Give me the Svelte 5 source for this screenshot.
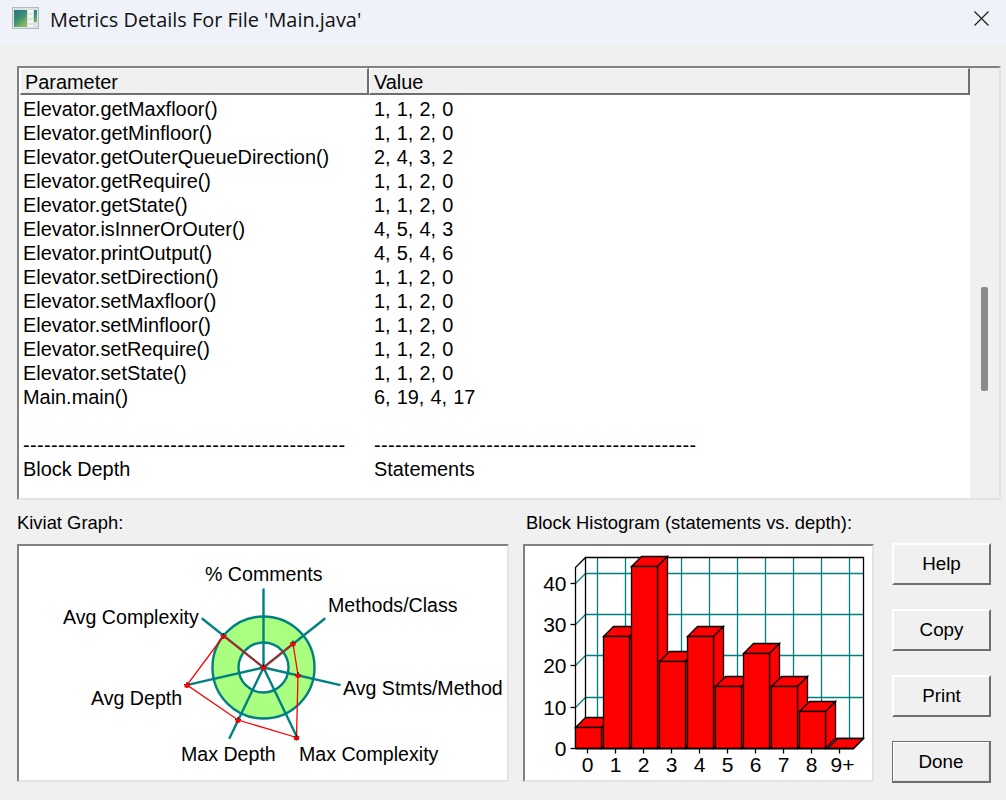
<script>
  const rows = [
    ['Elevator.getMaxfloor()', '1, 1, 2, 0'],
    ['Elevator.getMinfloor()', '1, 1, 2, 0'],
    ['Elevator.getOuterQueueDirection()', '2, 4, 3, 2'],
    ['Elevator.getRequire()', '1, 1, 2, 0'],
    ['Elevator.getState()', '1, 1, 2, 0'],
    ['Elevator.isInnerOrOuter()', '4, 5, 4, 3'],
    ['Elevator.printOutput()', '4, 5, 4, 6'],
    ['Elevator.setDirection()', '1, 1, 2, 0'],
    ['Elevator.setMaxfloor()', '1, 1, 2, 0'],
    ['Elevator.setMinfloor()', '1, 1, 2, 0'],
    ['Elevator.setRequire()', '1, 1, 2, 0'],
    ['Elevator.setState()', '1, 1, 2, 0'],
    ['Main.main()', '6, 19, 4, 17'],
    ['\u00a0', '\u00a0'],
    ['-'.repeat(46), '-'.repeat(46)],
    ['Block Depth', 'Statements']
  ];

  // Kiviat graph, coordinates relative to the panel's interior (origin 19,546)
  const ox = 19, oy = 546;
  const cx = 263.5 - ox, cy = 667.5 - oy;
  const spokes = Array.from({ length: 7 }, (_, i) => {
    const a = (i * 2 * Math.PI) / 7;
    return { x: cx + 79 * Math.sin(a), y: cy - 79 * Math.cos(a) };
  });
  const kiviat = [
    [263.5, 667.5], [293, 643.5], [298, 675], [296.5, 737.5], [238, 720], [187, 685], [223.5, 636]
  ].map(([x, y]) => [x - ox, y - oy]);
  const kivLabels = [
    ['% Comments', 205, 581],
    ['Methods/Class', 328, 612],
    ['Avg Stmts/Method', 343, 695],
    ['Max Complexity', 299, 761],
    ['Max Depth', 181, 761],
    ['Avg Depth', 91, 705],
    ['Avg Complexity', 63, 624]
  ];

  // Histogram, origin 525,546
  const hx = 525, hy = 546;
  const values = [5, 27, 44, 21, 27, 15, 23, 15, 9, 0];
  const xLabels = ['0', '1', '2', '3', '4', '5', '6', '7', '8', '9+'];
  const base = 748.5 - hy;
  const left = 575.5 - hx;
  const pitch = 28;
  const d = 10;
  const yOf = (v) => Math.round(748 - v * 4.135) + 0.5 - hy;
  const bars = values.map((v, i) => {
    const x = left + i * pitch;
    const y = yOf(v);
    return { x, y, w: 26, h: base - y };
  });
  const yTicks = [0, 10, 20, 30, 40];
  const vLines = Array.from({ length: 10 }, (_, i) => left + d + 12 + i * pitch);
  const wallRight = left + 278;
  const wallTop = 557 - hy + 0.5;
  const buttons = ['Help', 'Copy', 'Print', 'Done'];
</script>

<div class="window">
  <header class="titlebar">
    <svg class="appicon" width="27" height="22" viewBox="0 0 27 22" aria-hidden="true">
      <defs>
        <linearGradient id="pane" x1="0" y1="0" x2="0.6" y2="1">
          <stop offset="0" stop-color="#2f6f8f" />
          <stop offset="0.55" stop-color="#3c9070" />
          <stop offset="1" stop-color="#86b868" />
        </linearGradient>
      </defs>
      <rect x="0.5" y="0.5" width="26" height="21" fill="#dde3e4" stroke="#b4bcbe" />
      <rect x="2" y="3" width="13" height="17" fill="url(#pane)" />
      <rect x="16" y="3" width="5" height="3" fill="#f4f6f2" />
      <rect x="16" y="8" width="5" height="3" fill="#f4f6f2" />
      <rect x="16" y="13" width="5" height="3" fill="#f4f6f2" />
      <rect x="16" y="18" width="5" height="2" fill="#f4f6f2" />
      <rect x="22" y="3" width="3" height="12" fill="url(#pane)" />
    </svg>
    <span class="title">Metrics Details For File 'Main.java'</span>
    <svg class="close" width="15" height="15" viewBox="0 0 15 15" aria-hidden="true">
      <path d="M0.5 0.5 L14.5 14.5 M14.5 0.5 L0.5 14.5" stroke="#1a1a1a" stroke-width="1.2" fill="none" />
    </svg>
  </header>

  <main class="content">
    <section class="list">
      <div class="listmain">
        <div class="thead">
          <div class="th col1">Parameter</div>
          <div class="th col2">Value</div>
        </div>
        <div class="tbody">
          {#each rows as [a, b]}
            <div class="row" class:dash={a.startsWith('-')}><span class="c1">{a}</span><span class="c2">{b}</span></div>
          {/each}
        </div>
      </div>
      <div class="scroll"><div class="thumb"></div></div>
    </section>

    <section class="lower">
      <div class="kiviat">
        <div class="caption">Kiviat Graph:</div>
        <div class="sunken">
          <svg width="488" height="234" viewBox="0 0 488 234">
            <circle cx={cx} cy={cy} r="51" fill="#aaff80" stroke="#008080" stroke-width="2.4" />
            <circle cx={cx} cy={cy} r="25" fill="#fff" stroke="#008080" stroke-width="2.4" />
            {#each spokes as s}
              <line x1={cx} y1={cy} x2={s.x} y2={s.y} stroke="#008080" stroke-width="2.4" />
            {/each}
            <polygon points={kiviat.map((p) => p.join(',')).join(' ')} fill="none" stroke="#ff0000" stroke-width="1.3" />
            {#each kiviat as [x, y]}
              <path d="M{x - 3} {y - 0.5} H{x + 3} M{x} {y - 3} V{y + 3}" stroke="#000" stroke-width="1.2" fill="none" />
              <rect x={x - 2.5} y={y - 1} width="5" height="3.5" fill="#ff0000" />
            {/each}
            {#each kivLabels as [t, x, y]}
              <text x={x - ox} y={y - oy} class="chart">{t}</text>
            {/each}
          </svg>
        </div>
      </div>

      <div class="histogram">
        <div class="caption">Block Histogram (statements vs. depth):</div>
        <div class="sunken">
          <svg class="hist" width="347" height="234" viewBox="0 0 347 234">
            <!-- grid -->
            {#each yTicks.slice(1) as v}
              <line x1={left} y1={yOf(v)} x2={left + d} y2={yOf(v) - d} stroke="#008080" />
              <line x1={left + d} y1={yOf(v) - d} x2={wallRight + d} y2={yOf(v) - d} stroke="#008080" />
            {/each}
            {#each vLines as x}
              <line x1={x} y1={wallTop} x2={x} y2={base - d} stroke="#008080" />
            {/each}
            <!-- walls -->
            <path d="M{left} {base} V{wallTop + d} L{left + d} {wallTop} H{wallRight + d} V{base - d} L{wallRight} {base} H{left} M{left + d} {wallTop} V{base - d} M{left} {base} L{left + d} {base - d} H{wallRight + d}" fill="none" stroke="#000" />
            <!-- bars -->
            {#each bars as b}
              {#if b.h > 1}
                <path d="M{b.x} {b.y} l{d} {-d} h{b.w} l{-d} {d} z" fill="#ff0000" stroke="#000" />
                <path d="M{b.x + b.w} {b.y} l{d} {-d} v{b.h} l{-d} {d} z" fill="#ff0000" stroke="#000" />
                <rect x={b.x} y={b.y} width={b.w} height={b.h} fill="#ff0000" stroke="#000" />
              {:else}
                <path d="M{b.x} {b.y} l{d} {-d} h{b.w} l{-d} {d} z" fill="#ff0000" stroke="#000" />
              {/if}
            {/each}
            <!-- axes -->
            <line x1={left} y1={base} x2={wallRight} y2={base} stroke="#000" />
            {#each yTicks as v}
              <line x1={left - 5} y1={yOf(v)} x2={left} y2={yOf(v)} stroke="#000" />
              <text x={left - 9} y={yOf(v) + 7.5} text-anchor="end" class="chart axis">{v}</text>
            {/each}
            {#each xLabels as t, i}
              <line x1={left + 12 + i * pitch} y1={base} x2={left + 12 + i * pitch} y2={base + 5} stroke="#000" />
              <text x={left + 12 + i * pitch + (t === '9+' ? 3 : 0)} y={base + 23} text-anchor="middle" class="chart axis">{t}</text>
            {/each}
          </svg>
        </div>
      </div>

      <div class="buttons">
        {#each buttons as b}
          <button class:default={b === 'Done'}>{b}</button>
        {/each}
      </div>
    </section>
  </main>
</div>

<style>
  :global(body) {
    margin: 0;
    background: #f0f0f0;
  }
  .window {
    width: 1006px;
    height: 800px;
    background: #f0f0f0;
    font-family: "Liberation Sans", Arial, sans-serif;
    font-size: 18.4px;
    color: #000;
    overflow: hidden;
  }
  .titlebar {
    height: 45px;
    background: #eff3f9;
    display: flex;
    align-items: center;
    box-sizing: border-box;
    padding: 0 17px 0 12px;
  }
  .appicon {
    margin-right: 11px;
    margin-top: -9px;
  }
  .title {
    font-family: "Open Sans", "Noto Sans", sans-serif;
    font-size: 19.9px;
    flex: 1;
    color: #111;
    padding-bottom: 6px;
  }
  .close {
    margin-top: -8px;
  }
  .content {
    padding: 21px 5px 0 17px;
  }
  .list {
    height: 434px;
    box-sizing: border-box;
    border-top: 2px solid #808080;
    border-left: 2px solid #808080;
    border-right: 2px solid #e3e3e3;
    border-bottom: 2px solid #e3e3e3;
    display: flex;
    background: #fff;
    font-size: 19.9px;
  }
  .listmain {
    flex: 1;
    min-width: 0;
    overflow: hidden;
  }
  .thead {
    display: flex;
    height: 27px;
    background: #f0f0f0;
    margin-left: 1px;
    width: 950px;
  }
  .th {
    box-sizing: border-box;
    height: 27px;
    line-height: 27px;
    padding-left: 4px;
    border-top: 1px solid #fff;
    border-left: 1px solid #fff;
    border-right: 2px solid #6e6e6e;
    border-bottom: 2px solid #6e6e6e;
  }
  .col1 {
    width: 349px;
  }
  .col2 {
    flex: 1;
  }
  .tbody {
    padding: 2px 0 0 4px;
  }
  .row {
    display: flex;
    height: 24px;
    line-height: 24px;
    white-space: nowrap;
  }
  .dash {
    letter-spacing: 0.39px;
  }
  .c1 {
    width: 351px;
    flex: none;
  }
  .c2 {
    word-spacing: 0.6px;
  }
  .scroll {
    width: 29px;
    flex: none;
    background: #f0f0f0;
    position: relative;
  }
  .thumb {
    position: absolute;
    left: 11px;
    top: 219px;
    width: 7px;
    height: 104px;
    background: #8a8a8a;
    border-radius: 2px;
  }
  .lower {
    display: flex;
    margin-top: 10px;
  }
  .caption {
    height: 34px;
    line-height: 26px;
  }
  .sunken {
    box-sizing: border-box;
    height: 238px;
    border-top: 2px solid #808080;
    border-left: 2px solid #808080;
    border-right: 2px solid #e3e3e3;
    border-bottom: 2px solid #e3e3e3;
    background: #fff;
  }
  .sunken svg {
    display: block;
  }
  .hist line,
  .hist path,
  .hist rect {
    stroke-width: 1.3px;
  }
  .kiviat {
    width: 492px;
    margin-right: 14px;
  }
  .kiviat .sunken {
    width: 492px;
  }
  .histogram {
    width: 351px;
    margin-right: 18px;
  }
  .histogram .caption {
    white-space: nowrap;
    margin-left: 3px;
  }
  .histogram .sunken {
    width: 351px;
  }
  .chart {
    font-family: "Liberation Sans", Arial, sans-serif;
    font-size: 19.6px;
    fill: #000;
  }
  .axis {
    font-size: 21px;
  }
  .buttons {
    display: flex;
    flex-direction: column;
    gap: 24px;
    padding-top: 33px;
  }
  button {
    width: 99px;
    height: 42px;
    box-sizing: border-box;
    font-family: "Liberation Sans", Arial, sans-serif;
    font-size: 18.8px;
    color: #000;
    background: #f0f0f0;
    border-top: 2px solid #fff;
    border-left: 2px solid #fff;
    border-right: 2px solid #6e6e6e;
    border-bottom: 2px solid #6e6e6e;
    padding: 0;
  }
  button.default {
    border: 1px solid #6e6e6e;
    border-right-width: 2px;
    border-bottom-width: 2px;
    box-shadow: inset 1px 1px 0 #fff, inset -1px -1px 0 #e3e3e3;
  }
</style>
